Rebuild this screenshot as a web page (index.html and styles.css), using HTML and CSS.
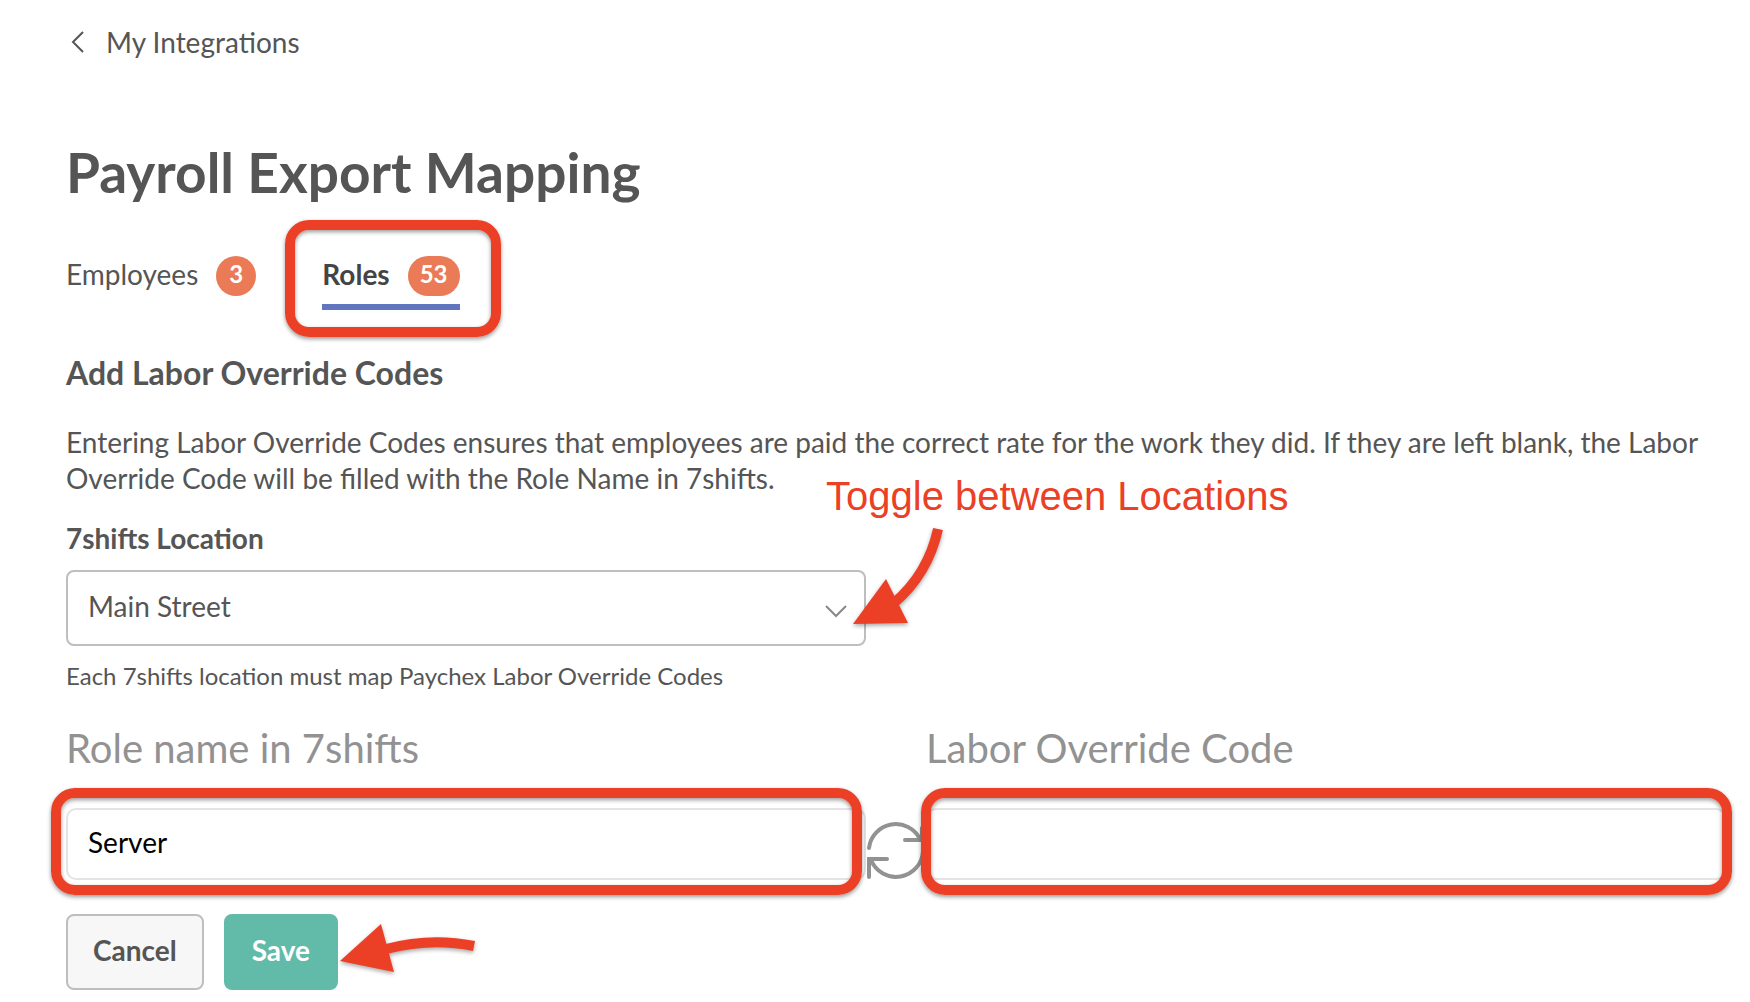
FILE: index.html
```
<!DOCTYPE html>
<html lang="en">
<head>
    <meta charset="utf-8">
    <title>Payroll Export Mapping</title>
    <link rel="stylesheet" href="styles.css">
</head>
<body>
    <main class="page">
        <a class="back" href="#">
            <svg class="back-icon" width="14" height="22" viewBox="0 0 14 22"><path d="M12 1L2 11l10 10"/></svg>
            My Integrations
        </a>

        <h1>Payroll Export Mapping</h1>

        <nav class="tabs">
            <a class="tab" href="#">Employees <span class="badge">3</span></a>
            <a class="tab active marked" href="#">Roles <span class="badge">53</span></a>
        </nav>

        <h2>Add Labor Override Codes</h2>
        <p class="intro">Entering Labor Override Codes ensures that employees are paid the correct rate for the work they did. If they are left blank, the Labor Override Code will be filled with the Role Name in 7shifts.</p>

        <form>
            <div class="columns">
                <div class="location">
                    <label class="location-label" for="location">7shifts Location</label>
                    <div class="select-box">
                        <select id="location">
                            <option>Main Street</option>
                        </select>
                        <svg class="caret" width="22" height="13" viewBox="0 0 22 13"><path d="M1 1l10 10L21 1"/></svg>
                        <div class="note">
                            Toggle between Locations
                            <svg class="arrow" width="104" height="108" viewBox="0 0 104 108">
                                <path class="shaft" d="M92 7Q82 52 48 81"/>
                                <path class="head" d="M7 102L40 57L62 101Z"/>
                            </svg>
                        </div>
                    </div>
                    <p class="help">Each 7shifts location must map Paychex Labor Override Codes</p>
                </div>
            </div>

            <div class="columns mapping">
                <label class="column-label" for="role">Role name in 7shifts</label>
                <label class="column-label code-label" for="code">Labor Override Code</label>
                <div class="field marked mark-role">
                    <input id="role" type="text" value="Server">
                </div>
                <svg class="sync" width="60" height="72" viewBox="0 0 60 72">
                    <path d="M3 40A27 27 0 0 1 54 31M39 32H56V20"/>
                    <path d="M57 43A27 27 0 0 1 5 52M21 51H3V69"/>
                </svg>
                <div class="field marked mark-code">
                    <input id="code" type="text">
                </div>
            </div>

            <div class="actions">
                <button type="button">Cancel</button>
                <div class="save-box">
                    <button type="submit" class="save">Save</button>
                    <svg class="arrow save-arrow" width="144" height="76" viewBox="0 0 144 76">
                        <path class="shaft" d="M136 32Q93 23 48 35"/>
                        <path class="head" d="M2 47L43 10L56 58Z"/>
                    </svg>
                </div>
            </div>
        </form>
    </main>
</body>
</html>
```
FILE: styles.css
```
* {
    box-sizing: border-box;
}
body {
    margin: 0;
    background: #fff;
    color: #555;
    font-family: Lato, "Open Sans", sans-serif;
    font-size: 28px;
    line-height: 36px;
}
h1, h2, p {
    margin: 0;
}
a {
    color: inherit;
    text-decoration: none;
}
svg {
    display: block;
    fill: none;
}
.page {
    padding: 24px 24px 12px 66px;
}

.back {
    display: inline-flex;
    align-items: center;
    gap: 21px;
    padding-left: 5px;
}
.back-icon {
    stroke: #555;
    stroke-width: 2;
}

h1 {
    margin-top: 80px;
    font-size: 55px;
    line-height: 64px;
}
h2 {
    margin-top: 43px;
    font-size: 32px;
    line-height: 40px;
}
.intro {
    margin-top: 31px;
}

.tabs {
    display: flex;
    gap: 66px;
    margin-top: 52px;
}
.tab {
    display: flex;
    gap: 18px;
    padding-bottom: 8px;
    border-bottom: 6px solid transparent;
}
.tab.active {
    border-color: #6077c0;
    color: #444;
    font-weight: bold;
}
.badge {
    min-width: 40px;
    height: 40px;
    padding: 0 12px;
    border-radius: 20px;
    background: #ea7b56;
    color: #fff;
    font-size: 24px;
    font-weight: bold;
    text-align: center;
}

/* red outline drawn around the parts to look at */
.marked {
    position: relative;
}
.marked::after {
    content: "";
    position: absolute;
    border: 10px solid #eb4026;
    border-radius: 24px;
    box-shadow: 0 2px 4px rgba(0, 0, 0, 0.4), inset 0 2px 4px rgba(0, 0, 0, 0.4);
    pointer-events: none;
}
.tab.marked::after {
    inset: -36px -41px -33px -37px;
}
.mark-role::after {
    inset: -20px 4px -15px -15px;
}
.mark-code::after {
    inset: -20px -6px -15px -5px;
}

.columns {
    display: grid;
    grid-template-columns: 1fr 60px 1fr;
}
.location {
    margin-top: 24px;
}
.location-label {
    display: block;
    font-weight: bold;
}
.select-box {
    position: relative;
    margin-top: 14px;
}
select, input {
    display: block;
    width: 100%;
    height: 72px;
    padding: 0 20px 4px;
    border: 2px solid #e4e4e4;
    border-radius: 10px;
    background: #fff;
    color: #000;
    font: inherit;
}
select {
    height: 76px;
    border-color: #bebebe;
    border-radius: 8px;
    color: #555;
    appearance: none;
}
.caret {
    position: absolute;
    top: 35px;
    right: 19px;
    stroke: #888;
    stroke-width: 2;
}
.help {
    margin-top: 12px;
    font-size: 24px;
}

.note {
    position: absolute;
    top: -92px;
    left: calc(100% - 40px);
    color: #eb4026;
    font: 40px/36px "Liberation Sans", Arial, sans-serif;
    white-space: nowrap;
    pointer-events: none;
}
.note .arrow {
    margin: 8px 0 0 20px;
}
.arrow {
    filter: drop-shadow(0 2px 2px rgba(0, 0, 0, 0.35));
}
.shaft {
    stroke: #eb4026;
    stroke-width: 10;
}
.head {
    fill: #eb4026;
}

.mapping {
    margin-top: 30px;
}
.column-label {
    margin-bottom: 36px;
    color: #929292;
    font-size: 40px;
    line-height: 48px;
}
.code-label {
    grid-column: 3;
}
.sync {
    stroke: #929292;
    stroke-width: 4;
    stroke-linecap: round;
}

.actions {
    display: flex;
    gap: 20px;
    margin-top: 34px;
}
button {
    height: 76px;
    padding: 0 25px 4px;
    border: 2px solid #bebebe;
    border-radius: 8px;
    background: #f7f7f7;
    color: #555;
    font: inherit;
    font-weight: bold;
}
.save {
    padding: 0 26px 4px;
    border-color: #62baa9;
    background: #62baa9;
    color: #fff;
}
.save-box {
    position: relative;
}
.save-arrow {
    position: absolute;
    top: 0;
    left: 100%;
}
```
